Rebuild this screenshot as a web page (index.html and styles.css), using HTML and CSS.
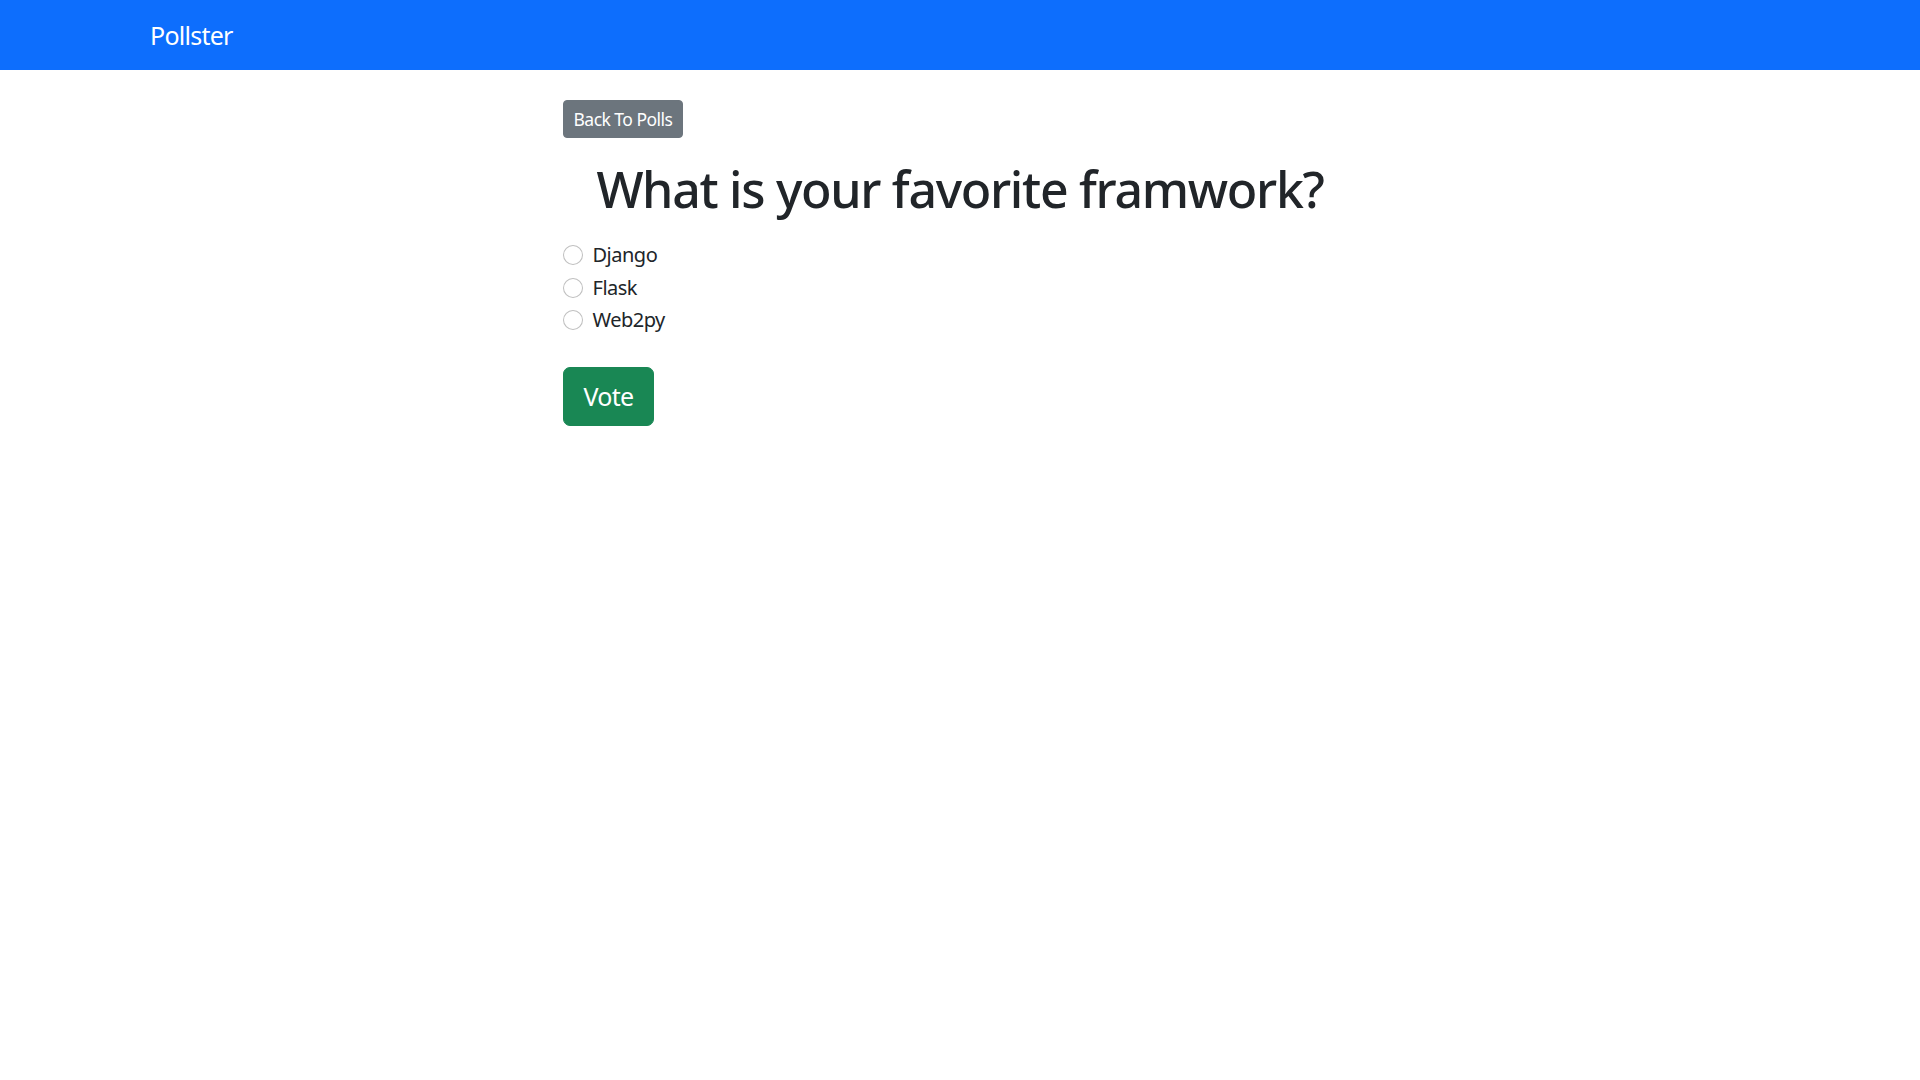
FILE: index.html
```html
<!DOCTYPE html>
<html lang="en">
<head>
<meta charset="utf-8">
<title>Pollster</title>
<link rel="stylesheet" href="styles.css">
</head>
<body>
<nav class="navbar">
  <div class="container">
    <a class="navbar-brand" href="#">Pollster</a>
  </div>
</nav>
<main class="container">
  <div class="row">
    <div class="col">
      <a class="btn btn-secondary btn-sm back" href="#">Back To Polls</a>
      <h1 class="title">What is your favorite framwork?</h1>
      <form class="poll-form">
        <div class="form-check">
          <input class="form-check-input" type="radio" name="choice" id="c1">
          <label class="form-check-label" for="c1">Django</label>
        </div>
        <div class="form-check">
          <input class="form-check-input" type="radio" name="choice" id="c2">
          <label class="form-check-label" for="c2">Flask</label>
        </div>
        <div class="form-check">
          <input class="form-check-input" type="radio" name="choice" id="c3">
          <label class="form-check-label" for="c3">Web2py</label>
        </div>
        <button type="button" class="btn btn-success btn-lg vote">Vote</button>
      </form>
    </div>
  </div>
</main>
</body>
</html>
```

FILE: styles.css
```css
html {
  font-size: 20px;
}
* {
  box-sizing: border-box;
}
body {
  margin: 0;
  font-family: "Noto Sans", "Open Sans", sans-serif;
  font-size: 1rem;
  line-height: 1.5;
  letter-spacing: -0.025em;
  color: #212529;
  background: #fff;
}
.navbar {
  background: #0d6efd;
  padding: 0.5rem 0;
  height: 70px;
}
.container {
  max-width: 1650px;
  margin: 0 auto;
  padding: 0 15px;
}
.navbar-brand {
  display: inline-block;
  padding: 0.3125rem 0;
  margin-top: 1px;
  font-size: 1.25rem;
  line-height: 1.5;
  letter-spacing: -0.03em;
  color: #fff;
  text-decoration: none;
  white-space: nowrap;
}
.row {
  display: flex;
  justify-content: center;
  margin: 0 -15px;
}
.col {
  width: 50%;
  padding: 0 15px;
}
.btn {
  display: inline-block;
  font-weight: 400;
  text-align: center;
  text-decoration: none;
  border: 1px solid transparent;
  color: #fff;
  font-family: inherit;
  letter-spacing: -0.03em;
  cursor: pointer;
}
.btn-sm {
  padding: 0.25rem 0.5rem;
  font-size: 0.875rem;
  line-height: 1.5;
  border-radius: 0.2rem;
}
.btn-lg {
  padding: 0.5rem 1rem;
  font-size: 1.25rem;
  line-height: 1.5;
  border-radius: 0.35rem;
}
.btn-secondary {
  background: #6c757d;
  border-color: #6c757d;
}
.btn-success {
  background: #198754;
  border-color: #198754;
}
.back {
  margin-top: 30px;
}
.title {
  margin: 21px 0 21px;
  font-size: 2.5rem;
  font-weight: 500;
  line-height: 1.2;
  letter-spacing: -0.026em;
  text-align: center;
}
.poll-form {
  display: flex;
  flex-direction: column;
  align-items: flex-start;
}
.form-check {
  display: block;
  min-height: 1.5rem;
  padding-left: 1.5em;
  margin-bottom: 0.125rem;
}
.form-check-input {
  appearance: none;
  float: left;
  font-size: inherit;
  width: 1em;
  height: 1em;
  margin: 0.25em 0 0 -1.5em;
  border: 1px solid rgba(0, 0, 0, 0.25);
  border-radius: 50%;
  background: #fff;
}
.form-check-label {
  display: inline-block;
}
.vote {
  margin-top: 29px;
}
```
